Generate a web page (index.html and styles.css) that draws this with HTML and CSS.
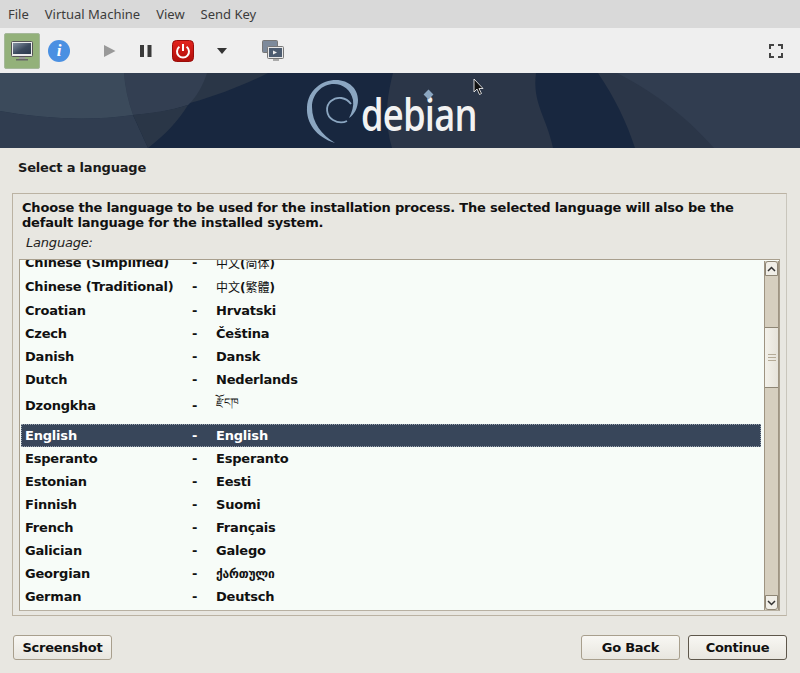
FILE: index.html
```html
<!DOCTYPE html>
<html lang="en">
<head>
<meta charset="utf-8">
<title>Debian installer</title>
<link rel="stylesheet" href="styles.css">
</head>
<body>
<div class="window">
  <nav class="menubar">
    <span>File</span><span>Virtual Machine</span><span>View</span><span>Send Key</span>
  </nav>
  <div class="toolbar">
    <span class="tool-active">
      <svg width="24" height="24" viewBox="0 0 24 24"><defs><linearGradient id="scr" x1="0" y1="0" x2="1" y2="1"><stop offset="0" stop-color="#8592a3"/><stop offset="0.55" stop-color="#3c4a5e"/><stop offset="1" stop-color="#2c3a4e"/></linearGradient></defs><rect x="1.500" y="2.500" width="21" height="15" rx="1" fill="#ececec" stroke="#555"/><rect x="3" y="4" width="18" height="11" fill="url(#scr)"/><rect x="9" y="18" width="6" height="2" fill="#999"/><rect x="6" y="20" width="12" height="1.500" fill="#666"/></svg>
    </span>
    <span class="tool-info">i</span>
    <svg class="tool-play" width="14" height="14" viewBox="0 0 14 14"><path d="M1 1 L12.500 7 L1 13 Z" fill="#999"/></svg>
    <svg class="tool-pause" width="14" height="14" viewBox="0 0 14 14"><rect x="1" y="1" width="4" height="12" fill="#3a3a3a"/><rect x="8.500" y="1" width="4" height="12" fill="#3a3a3a"/></svg>
    <svg class="tool-power" width="22" height="22" viewBox="0 0 22 22"><defs><linearGradient id="pwr" x1="0" y1="0" x2="0" y2="1"><stop offset="0" stop-color="#e4241e"/><stop offset="1" stop-color="#b00f0b"/></linearGradient></defs><rect x="0.500" y="0.500" width="21" height="21" rx="4" fill="url(#pwr)" stroke="#9a0d0a"/><path d="M7.400 6.800 A6 6 0 1 0 14.600 6.800" fill="none" stroke="#fff" stroke-width="2"/><rect x="10" y="4" width="2" height="7" fill="#fff"/></svg>
    <svg class="tool-caret" width="12" height="6" viewBox="0 0 12 6"><path d="M1 0 H11 L6 6 Z" fill="#333"/></svg>
    <svg class="tool-screens" width="22" height="22" viewBox="0 0 22 22"><rect x="0.500" y="0.500" width="15" height="12" rx="1" fill="#7d8a9b" stroke="#777"/><rect x="5.500" y="6.500" width="16" height="12" rx="1" fill="#e8e8e8" stroke="#777"/><rect x="7" y="8" width="13" height="9" fill="#4d5c70"/><path d="M11 10.500 L15 12.500 L11 14.500 Z" fill="#eee"/><rect x="11" y="19" width="6" height="2" fill="#aaa"/></svg>
    <svg class="tool-full" width="14" height="14" viewBox="0 0 14 14"><path d="M1 5 V1 H5 M9 1 H13 V5 M13 9 V13 H9 M5 13 H1 V9" fill="none" stroke="#444" stroke-width="2"/></svg>
  </div>
  <header class="banner">
    <svg class="banner-art" width="800" height="75" viewBox="0 0 800 75">
      <rect width="800" height="75" fill="#2b3648"/>
      <path d="M0 0 H393 C388 20 383 45 392 75 H0 Z" fill="#18273f"/>
      <path d="M0 0 H268 C225 22 170 38 133 42 C90 48 45 46 0 38 Z" fill="#2a3647"/>
      <path d="M0 38 C45 46 90 48 133 42 L148 75 H0 Z" fill="#303d50"/>
      <path d="M124 0 H207 C200 22 188 32 188 32 C170 38 150 41 133 42 C128 28 125 14 124 0 Z" fill="#333f52"/>
      <path d="M0 0 H124 C125 14 128 28 133 42 C90 48 45 46 0 38 Z" fill="#3b4a5b"/>
      <path d="M133 42 C150 40 170 38 188 32 C178 48 165 62 148 75 Z" fill="#2a3647"/>
      <path d="M536 0 H598 C615 25 627 50 635 75 H553 C547 45 532 30 536 0 Z" fill="#18273f"/>
      <path d="M617 0 H800 V75 H714 C690 48 660 22 617 0 Z" fill="#313d50"/>
      <path d="M335 70 C316 64 306 50 307 34 C308 17 322 7 336 7 C349 7 358 16 358 27 C358 35 354 42 349 45 C352 39 354 33 353 27 C351 17 343 11 334 11 C322 11 312 21 312 34 C312 50 322 62 335 70 Z" fill="#8ba6c1"/>
      <path d="M351 31 C346 24 337 23 331 28 C325 33 326 43 333 47 C338 50 343 50 347 48" fill="none" stroke="#8ba6c1" stroke-width="1.800"/>
    </svg>
    <span class="wordmark">debian</span>
    <span class="diamond"></span>
  </header>
  <main class="installer">
    <h1 class="page-title">Select a language</h1>
    <section class="panel">
      <p class="prompt">Choose the language to be used for the installation process. The selected language will also be the default language for the installed system.</p>
      <p class="field-label">Language:</p>
      <div class="listbox">
        <div class="list">
          <div class="rows">
            <div class="row row-cut"><span class="c1">Chinese (Simplified)</span><span class="c2">-</span><span class="c3 cjk">中文<b>(</b>简体<b>)</b></span></div>
            <div class="row row-cn"><span class="c1">Chinese (Traditional)</span><span class="c2">-</span><span class="c3 cjk">中文<b>(</b>繁體<b>)</b></span></div>
            <div class="row"><span class="c1">Croatian</span><span class="c2">-</span><span class="c3">Hrvatski</span></div>
            <div class="row"><span class="c1">Czech</span><span class="c2">-</span><span class="c3">Čeština</span></div>
            <div class="row"><span class="c1">Danish</span><span class="c2">-</span><span class="c3">Dansk</span></div>
            <div class="row"><span class="c1">Dutch</span><span class="c2">-</span><span class="c3">Nederlands</span></div>
            <div class="row row-dz"><span class="c1">Dzongkha</span><span class="c2">-</span><span class="c3 tib">རྫོང་ཁ</span></div>
            <div class="row row-sel"><span class="c1">English</span><span class="c2">-</span><span class="c3">English</span></div>
            <div class="row"><span class="c1">Esperanto</span><span class="c2">-</span><span class="c3">Esperanto</span></div>
            <div class="row"><span class="c1">Estonian</span><span class="c2">-</span><span class="c3">Eesti</span></div>
            <div class="row"><span class="c1">Finnish</span><span class="c2">-</span><span class="c3">Suomi</span></div>
            <div class="row"><span class="c1">French</span><span class="c2">-</span><span class="c3">Français</span></div>
            <div class="row"><span class="c1">Galician</span><span class="c2">-</span><span class="c3">Galego</span></div>
            <div class="row"><span class="c1">Georgian</span><span class="c2">-</span><span class="c3 geo">ქართული</span></div>
            <div class="row"><span class="c1">German</span><span class="c2">-</span><span class="c3">Deutsch</span></div>
          </div>
        </div>
        <div class="scrollbar">
          <span class="sb-btn"><svg width="9" height="6" viewBox="0 0 9 6"><path d="M1 5 L4.500 1.500 L8 5" fill="none" stroke="#333" stroke-width="1.500"/></svg></span>
          <div class="sb-track">
            <div class="sb-thumb"><i></i><i></i><i></i></div>
          </div>
          <span class="sb-btn"><svg width="9" height="6" viewBox="0 0 9 6"><path d="M1 1 L4.500 4.500 L8 1" fill="none" stroke="#333" stroke-width="1.500"/></svg></span>
        </div>
      </div>
    </section>
    <footer class="actions">
      <button class="btn btn-shot">Screenshot</button>
      <span class="spacer"></span>
      <button class="btn btn-back">Go Back</button>
      <button class="btn btn-next">Continue</button>
    </footer>
  </main>
  <svg class="cursor" width="12" height="18" viewBox="0 0 12 18"><path d="M1 1 V14 L4 11 L6.500 16.500 L8.500 15.500 L6 10.500 H10 Z" fill="#111" stroke="#fff" stroke-width="0.800"/></svg>
</div>
</body>
</html>
```
FILE: styles.css
```css
* { box-sizing: border-box; }
html, body { margin: 0; padding: 0; }
body { width: 800px; height: 673px; overflow: hidden; background: #e8e7e1; font-family: "DejaVu Sans", sans-serif; }
.window { position: relative; width: 800px; height: 673px; display: flex; flex-direction: column; }

.menubar { height: 28px; flex: none; background: #d9d9d9; display: flex; align-items: center; gap: 16px; padding: 0 8px; font: 13px "Noto Sans", sans-serif; color: #3c3c3c; }
.toolbar { height: 45px; background: #efefef; position: relative; display: flex; align-items: center; flex: none; }
.tool-active { margin-left: 4px; width: 36px; height: 36px; background: #93b17a; border: 1px solid #a5b89a; border-radius: 2px; display: flex; align-items: center; justify-content: center; }
.tool-info { margin-left: 8px; width: 22px; height: 22px; border-radius: 50%; background: #4a90e2; color: #fff; font: italic bold 17px/22px "Liberation Serif", serif; text-align: center; }
.tool-play { margin-left: 33px; }
.tool-pause { margin-left: 22px; }
.tool-power { margin-left: 19px; }
.tool-caret { margin-left: 22px; }
.tool-screens { margin-left: 34px; }
.tool-full { margin-left: auto; margin-right: 17px; }

.banner { height: 75px; position: relative; flex: none; overflow: hidden; background: #2b3648; }
.banner-art { display: block; }
.wordmark { position: absolute; left: 361px; top: 10px; font: 600 46px/60px "Open Sans", sans-serif; color: #f2f2f2; transform: scaleX(0.79); transform-origin: left center; letter-spacing: -1px; }
.diamond { position: absolute; left: 425px; top: 18px; width: 7px; height: 7px; background: #8ba6c1; transform: rotate(45deg); }

.installer { flex: 1; display: flex; flex-direction: column; padding: 0 13px; color: #111; font-size: 13px; font-weight: bold; }
.page-title { margin: 12px 5px 0; font-size: 13px; line-height: 16px; font-weight: bold; letter-spacing: -0.18px; color: #1a1a1a; }
.panel { margin: 17px 0 0 -1px; height: 423px; flex: none; border: 1px solid #bbb3a3; border-right-color: #c9c6bc; padding: 0 6px 4px 6px; display: flex; flex-direction: column; }
.prompt { margin: 6px 0 0 3px; line-height: 15px; letter-spacing: -0.19px; width: 730px; }
.field-label { margin: 5px 0 0 7px; font-weight: normal; font-style: italic; line-height: 16px; font-size: 13px; letter-spacing: -0.2px; color: #222; }
.listbox { margin-top: 8px; flex: 1; min-height: 0; display: flex; border: 1px solid #a89f8d; border-bottom-color: #b8b1a2; background: #f7fcf8; }
.list { flex: 1; min-width: 0; overflow: hidden; padding: 0 3px 0 1px; }
.rows { margin-top: -8px; }
.row { height: 23px; display: flex; align-items: center; padding-left: 4px; letter-spacing: -0.2px; }
.row-cut { height: 21px; }
.row-cn { height: 26px; }
.row-dz { height: 29px; margin-bottom: 4px; }
.row-sel { background: #38465a; color: #fff; outline: 1px dotted #9aa3ae; outline-offset: -1px; }
.c1 { width: 167px; }
.c2 { width: 24px; }
.c3 { flex: 1; }
.cjk { font-family: "DejaVu Sans", "Noto Sans CJK SC", sans-serif; font-weight: normal; font-size: 12px; letter-spacing: 0; }
.cjk b { font-size: 12px; }
.geo { font-size: 12px; }
.tib { font-weight: normal; font-size: 11px; }

.scrollbar { flex: none; width: 15px; margin-top: 1px; display: flex; flex-direction: column; background: #d6cfbf; border-left: 1px solid #9e9482; border-right: 1px solid #9e9482; }
.sb-btn { flex: none; height: 15px; background: #f0eee7; border: 1px solid #8e8675; border-radius: 3px 3px 0 0; display: flex; align-items: center; justify-content: center; }
.sb-btn:last-child { border-radius: 0 0 3px 3px; }
.sb-track { flex: 1; padding-top: 51px; }
.sb-thumb { height: 61px; background: linear-gradient(90deg, #f3f1ea, #e6e3da); border-top: 1px solid #8e8675; border-bottom: 1px solid #8e8675; display: flex; flex-direction: column; align-items: center; justify-content: center; gap: 2px; }
.sb-thumb i { display: block; width: 8px; height: 1px; background: #b5ab97; }

.actions { display: flex; align-items: center; gap: 8px; margin-top: 19px; }
.spacer { flex: 1; }
.btn { height: 25px; padding: 0; font: bold 13px "DejaVu Sans", sans-serif; letter-spacing: -0.25px; color: #111; background: linear-gradient(#f8f7f3, #e8e6df); border: 1px solid #a89f8d; border-radius: 3px; }
.btn-shot { width: 99px; }
.btn-back { width: 99px; }
.btn-next { width: 99px; border-color: #5e574b; }

.cursor { position: absolute; left: 473px; top: 78px; }
```
